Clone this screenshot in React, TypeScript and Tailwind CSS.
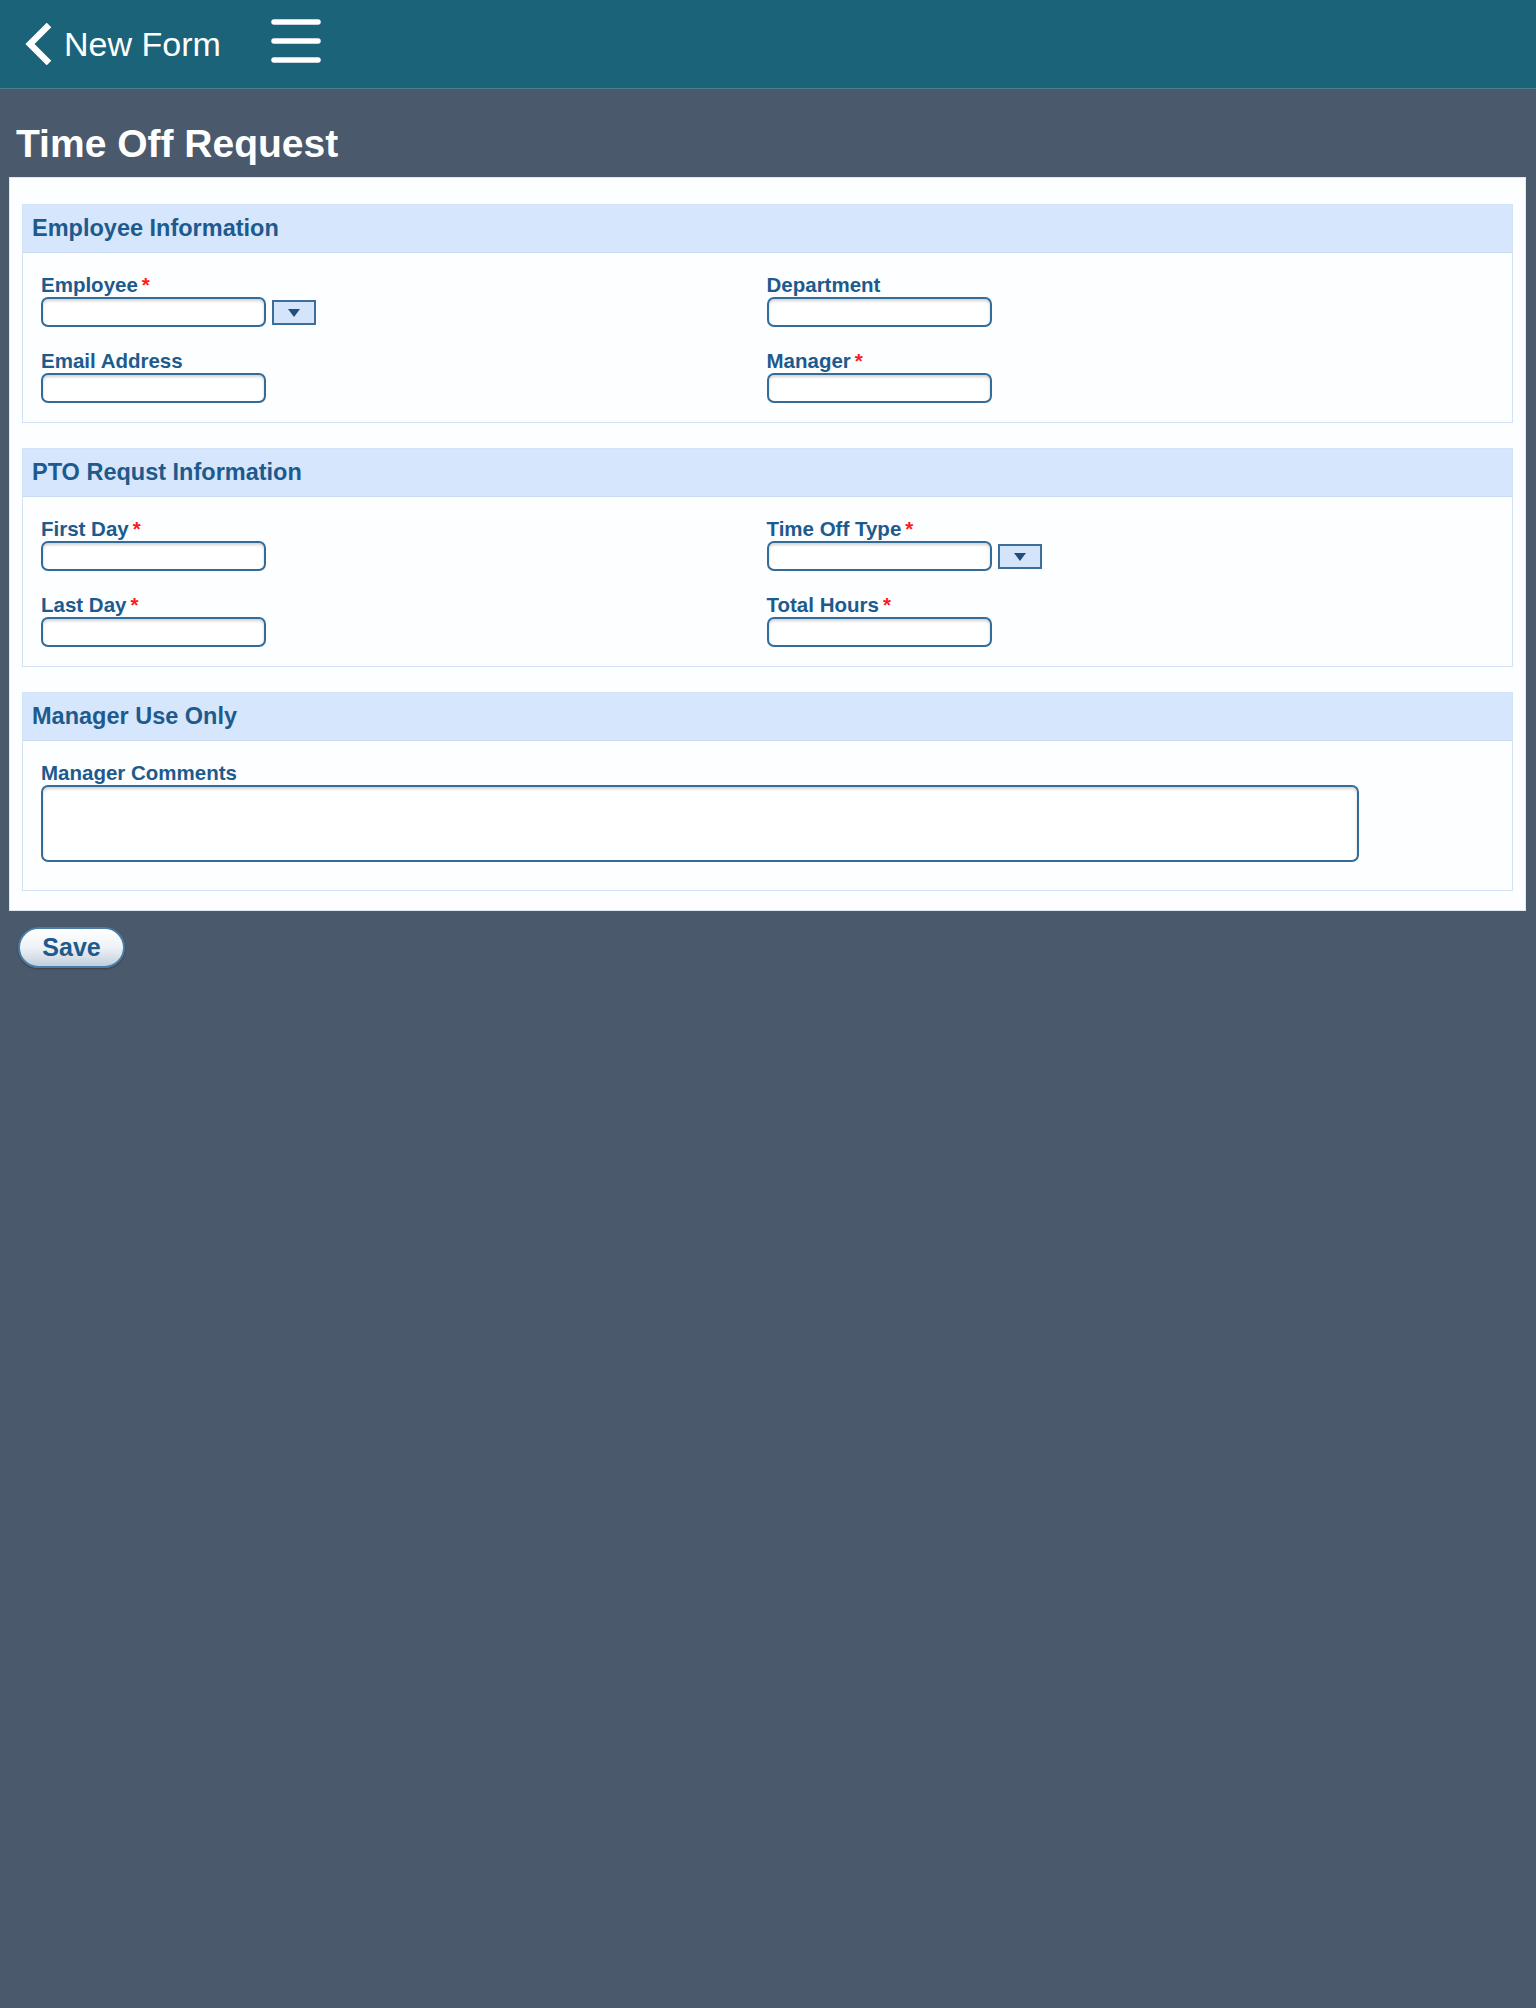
import type { ReactNode } from "react";

const TEXT = "text-[#1e5a8c]";

const Required = () => <span className="ml-[4px] text-[#ff1a1a]">*</span>;

const TextBox = ({ wide }: { wide?: boolean }) => (
  <div
    className={`${wide ? "w-[1318px] h-[77px]" : "w-[225px] h-[30px]"} rounded-[7px] border-2 border-[#336c99] bg-white shadow-[inset_0_2px_3px_rgba(0,0,0,0.18)]`}
  />
);

const DropButton = () => (
  <div className="ml-[6px] mt-[3px] w-[44px] h-[25px] border-2 border-[#3b6e99] bg-[#d4e5fb] flex items-center justify-center">
    <svg width="14" height="10" viewBox="0 0 14 10">
      <polygon points="1,1 13,1 7,9" fill="#1f4f7a" />
    </svg>
  </div>
);

interface FieldProps {
  label: string;
  required?: boolean;
  dropdown?: boolean;
  wide?: boolean;
}

const Field = ({ label, required, dropdown, wide }: FieldProps) => (
  <div>
    <div className={`h-[24px] leading-[24px] text-[20.5px] font-bold ${TEXT}`}>
      {label}
      {required && <Required />}
    </div>
    <div className="flex items-start">
      <TextBox wide={wide} />
      {dropdown && <DropButton />}
    </div>
  </div>
);

const Section = ({ title, children, bottom }: { title: string; children: ReactNode; bottom: string }) => (
  <div className="border border-[#d3e2f4] bg-[#fcfeff]">
    <div className={`h-[48px] flex items-center px-[9px] bg-[#d6e6fc] border-b border-[#c9dbf3] text-[23.5px] font-bold ${TEXT}`}>
      {title}
    </div>
    <div className={`pl-[18px] pr-[20px] pt-[20px] ${bottom}`}>{children}</div>
  </div>
);

const App = () => {
  return (
    <div className="min-h-screen bg-[#4a596b] font-['Liberation_Sans',Arial,sans-serif]">
      <header className="h-[89px] bg-[#1b6379] border-b border-[#4f7d8c] flex items-center pl-[25px]">
        <svg width="27" height="42" viewBox="0 0 27 42" className="shrink-0">
          <polyline points="24,2 5,21 24,40" fill="none" stroke="white" strokeWidth="6.5" />
        </svg>
        <span className="ml-[12px] text-[34px] text-white leading-none">New Form</span>
        <svg width="50" height="50" viewBox="0 0 50 50" className="ml-[50px] shrink-0">
          <line x1="3" y1="3" x2="47" y2="3" stroke="white" strokeWidth="5.5" strokeLinecap="round" />
          <line x1="3" y1="22" x2="47" y2="22" stroke="white" strokeWidth="5.5" strokeLinecap="round" />
          <line x1="3" y1="41" x2="47" y2="41" stroke="white" strokeWidth="5.5" strokeLinecap="round" />
        </svg>
      </header>

      <div className="pl-[16px] pt-[33px] pb-[11px]">
        <h1 className="text-[39px] leading-[44px] font-bold text-white">Time Off Request</h1>
      </div>

      <div className="ml-[9px] mr-[10px] border border-[#dfe9f5] bg-[#fcfeff] px-[12px] pt-[26px] pb-[19px] flex flex-col gap-[25px]">
        <Section title="Employee Information" bottom="pb-[19px]">
          <div className="grid grid-cols-2 gap-y-[22px]">
            <Field label="Employee" required dropdown />
            <Field label="Department" />
            <Field label="Email Address" />
            <Field label="Manager" required />
          </div>
        </Section>

        <Section title="PTO Requst Information" bottom="pb-[19px]">
          <div className="grid grid-cols-2 gap-y-[22px]">
            <Field label="First Day" required />
            <Field label="Time Off Type" required dropdown />
            <Field label="Last Day" required />
            <Field label="Total Hours" required />
          </div>
        </Section>

        <Section title="Manager Use Only" bottom="pb-[28px]">
          <Field label="Manager Comments" wide />
        </Section>
      </div>

      <div className="pl-[18px] pt-[16px]">
        <button className="w-[107px] h-[41px] rounded-full border-2 border-[#4a7ca6] bg-gradient-to-b from-white via-[#eef2f6] to-[#c3cfdb] text-[25px] font-bold text-[#1e5a8c] shadow-[0_1px_2px_rgba(0,0,0,0.3)]">
          Save
        </button>
      </div>
    </div>
  );
};

export default App;
